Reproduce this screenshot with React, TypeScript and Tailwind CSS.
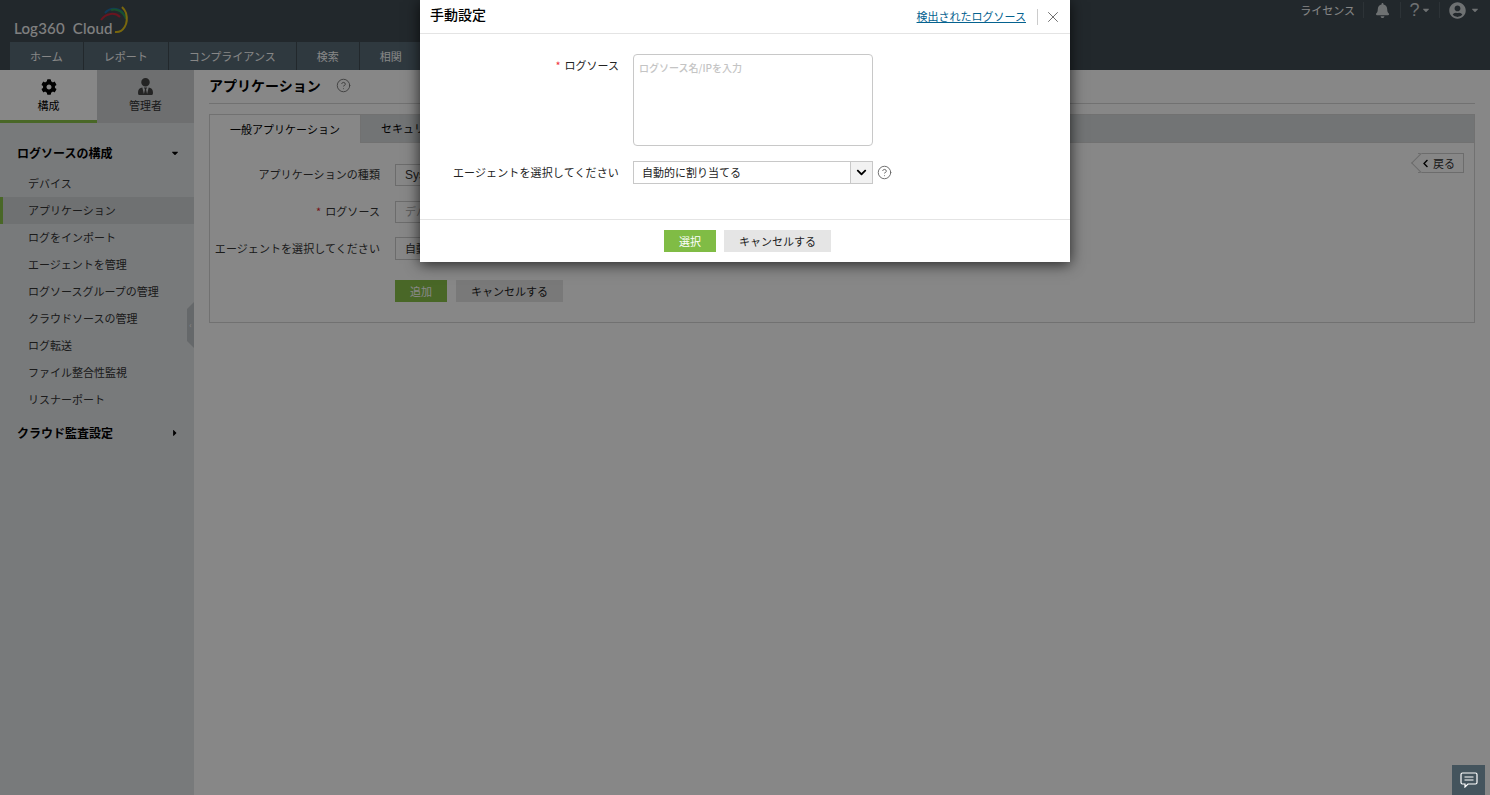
import { FaBell, FaCaretDown, FaCaretRight, FaChevronDown, FaChevronLeft, FaCog, FaUserCircle, FaUserTie } from 'react-icons/fa';
import { CircleHelp, X } from 'lucide-react';

const navItems = ['ホーム', 'レポート', 'コンプライアンス', '検索', '相関', 'アラート', '構成'];
const sideItems = [
  'デバイス',
  'アプリケーション',
  'ログをインポート',
  'エージェントを管理',
  'ログソースグループの管理',
  'クラウドソースの管理',
  'ログ転送',
  'ファイル整合性監視',
  'リスナーポート',
];

function Logo() {
  return (
    <div className="relative h-[42px] w-[194px]">
      <span className="absolute left-[14px] top-[19px] font-['Lato',sans-serif] text-[15px] font-medium leading-[18px] tracking-[0.2px] text-[#f2f2f2] whitespace-pre">
        Log360  Cloud
      </span>
      <svg className="absolute left-[98px] top-[5px]" width="32" height="30" viewBox="0 0 32 30" fill="none">
        <path d="M7 8 C13 1 24 3 27 12" stroke="#1f6fa8" strokeWidth="2" />
        <path d="M13 5 C19 3 26 7 28 14" stroke="#2e9a55" strokeWidth="2" />
        <path d="M3 15 C8 8 17 7 22 12" stroke="#c8283c" strokeWidth="2" />
        <path d="M17 27 C25 28 31 19 28 8 C27 5 26 4 24 2" stroke="#e5c31a" strokeWidth="2" />
      </svg>
    </div>
  );
}

function Header() {
  return (
    <header className="h-[70px] bg-[#414c54] text-white relative">
      <Logo />
      <nav className="flex h-[28px] pl-[10px] text-[11px]">
        {navItems.map((item) => (
          <div key={item} className="flex items-center bg-[#596c78] px-[20px] mr-px">
            {item}
          </div>
        ))}
      </nav>
      <div className="absolute right-0 top-0 flex h-[20px] items-center text-[#d0d5d8]">
        <span className="mr-px pr-2 text-[11px] text-white border-r border-[#566169]">ライセンス</span>
        <div className="flex h-4 w-9 items-center justify-center border-r border-[#566169]">
          <FaBell className="h-[15px] w-[15px]" />
        </div>
        <div className="flex h-4 w-[39px] items-center justify-center gap-px border-r border-[#566169]">
          <span className="font-['Liberation_Sans',sans-serif] text-[18px] leading-none">?</span>
          <FaCaretDown className="h-[10px] w-[10px]" />
        </div>
        <div className="flex h-4 w-[50px] items-center gap-1 pl-[9px]">
          <FaUserCircle className="h-[17px] w-[17px]" />
          <FaCaretDown className="h-[10px] w-[10px]" />
        </div>
      </div>
    </header>
  );
}

function Sidebar() {
  return (
    <aside className="relative w-[194px] shrink-0 bg-[#e3e6e9] text-[11px] text-[#333]">
      <div className="flex h-[53px]">
        <div className="flex w-[97px] flex-col items-center border-b-[3px] border-[#8bc34a] bg-[#ffffff] pt-[9px] text-black">
          <FaCog className="h-[16px] w-[16px]" />
          <span className="mt-[2px] leading-[16px]">構成</span>
        </div>
        <div className="flex w-[97px] flex-col items-center bg-[#d0d2d4] pt-[8px] text-[#333]">
          <FaUserTie className="h-[17px] w-[17px] text-[#444]" />
          <span className="mt-[2px] leading-[16px]">管理者</span>
        </div>
      </div>
      <div className="mt-[18px] flex h-[24px] items-center justify-between pl-[17px] pr-[14px] text-[12px] font-bold text-black">
        ログソースの構成
        <FaCaretDown className="h-[10px] w-[10px]" />
      </div>
      <ul className="mt-[5px]">
        {sideItems.map((item) => (
          <li
            key={item}
            className={
              item === 'アプリケーション'
                ? 'flex h-[27px] items-center border-l-[3px] border-[#8bc34a] bg-[#d2d5d8] pl-[25px]'
                : 'flex h-[27px] items-center pl-[28px]'
            }
          >
            {item}
          </li>
        ))}
      </ul>
      <div className="mt-[8px] flex h-[24px] items-center justify-between pl-[17px] pr-[14px] text-[12px] font-bold text-black">
        クラウド監査設定
        <FaCaretRight className="h-[10px] w-[10px]" />
      </div>
      <div className="absolute right-0 top-[232px] flex h-[46px] w-[7px] items-center justify-center bg-[#bfc4c8] text-[8px] leading-none text-white [clip-path:polygon(100%_0,100%_100%,0_85%,0_15%)]">
        ‹
      </div>
    </aside>
  );
}

function FormRow({ label, required, children }: { label: string; required?: boolean; children: React.ReactNode }) {
  return (
    <div className="flex h-[23px] items-center">
      <label className="w-[185px] pr-[15px] text-right text-[11px] tracking-[0.07px] whitespace-nowrap text-[#333]">
        {required && <span className="mr-1 text-[#e0252b]">*</span>}
        {label}
      </label>
      {children}
    </div>
  );
}

function Main() {
  return (
    <main className="flex-1 px-[15px] text-[11px] text-[#333]">
      <div className="flex h-[34px] items-center border-b border-[#d5d5d5] pb-[2px]">
        <h1 className="text-[14px] font-bold text-black">アプリケーション</h1>
        <CircleHelp className="ml-[15px] h-[15px] w-[15px] text-[#777]" strokeWidth={1.5} />
      </div>
      <section className="mt-[10px] h-[209px] border border-[#d5d5d5]">
        <div className="flex h-[28px] border-b border-[#d5d5d5] bg-[#d8dbde]">
          <div className="flex h-[28px] w-[151px] items-center justify-center border-r border-[#d5d5d5] bg-white text-black">
            一般アプリケーション
          </div>
          <div className="flex items-center px-[20px] text-black">セキュリティアプリケーション</div>
        </div>
        <div className="relative flex flex-col gap-[14px] pt-[20px]">
          <FormRow label="アプリケーションの種類">
            <div className="flex h-[22px] w-[240px] items-center border border-[#ccc] bg-white pl-[9px] font-['Liberation_Sans',sans-serif] text-[12px]">
              Syslog
            </div>
          </FormRow>
          <FormRow label="ログソース" required>
            <div className="flex h-[22px] w-[240px] items-center border border-[#ccc] bg-white pl-[9px] text-[#aaa]">
              デバイス
            </div>
          </FormRow>
          <FormRow label="エージェントを選択してください">
            <div className="flex h-[23px] w-[240px] items-center border border-[#ccc] bg-white pl-[9px]">
              自動的に割り当てる
            </div>
          </FormRow>
          <div className="mt-[6px] flex gap-[9px] pl-[185px]">
            <button type="button" className="h-[22px] w-[52px] bg-[#8bc34a] text-white">追加</button>
            <button type="button" className="h-[22px] w-[107px] bg-[#e5e5e5] text-[#222]">キャンセルする</button>
          </div>
          <div className="absolute right-[10px] top-[10px] flex h-[20px] w-[46px] items-center justify-end gap-[3px] border border-[#ccc] border-l-0 bg-white pr-[8px]">
            <span className="absolute -left-[4px] top-[2px] h-[14px] w-[14px] rotate-45 border-b border-l border-[#ccc] bg-white" />
            <FaChevronLeft className="relative h-[9px] w-[9px] text-black" />
            <span className="relative">戻る</span>
          </div>
        </div>
      </section>
    </main>
  );
}

function ManualDialog() {
  return (
    <div className="absolute left-[420px] top-0 z-20 h-[262px] w-[650px] bg-white text-[11px] text-[#222] shadow-[0_2px_14px_rgba(0,0,0,0.75)]">
      <div className="flex h-[34px] items-center justify-between border-b border-[#e4e4e4] pl-[10px] pr-[8px]">
        <h2 className="mb-[4px] text-[14px] font-medium text-black">手動設定</h2>
        <div className="flex items-center">
          <a className="text-[11px] text-[#05628f] underline">検出されたログソース</a>
          <span className="ml-[11px] mr-[6px] h-4 w-px bg-[#ccc]" />
          <X className="h-[18px] w-[18px] text-[#666]" strokeWidth={1.25} />
        </div>
      </div>
      <div className="flex h-[185px] flex-col gap-[15px] pt-[20px]">
        <div className="flex">
          <label className="w-[199px] pt-[3px] text-right">
            <span className="mr-1 text-[#f0353b]">*</span>ログソース
          </label>
          <div className="ml-[14px] h-[92px] w-[240px] rounded-[4px] border border-[#c8c8c8] px-[5px] py-[5px] text-[10px] font-medium text-[#c4c4c4]">
            ログソース名/IPを入力
          </div>
        </div>
        <div className="flex items-center">
          <label className="w-[199px] text-right tracking-[0.13px]">エージェントを選択してください</label>
          <div className="ml-[14px] flex h-[23px] w-[240px] items-center border border-[#c8c8c8]">
            <span className="flex-1 pl-[8px]">自動的に割り当てる</span>
            <span className="flex h-full w-[22px] items-center justify-center border-l border-[#c8c8c8] bg-[#f2f2f2]">
              <FaChevronDown className="h-[11px] w-[11px] text-black" />
            </span>
          </div>
          <CircleHelp className="ml-[4px] h-[15px] w-[15px] text-[#666]" strokeWidth={1.5} />
        </div>
      </div>
      <div className="flex h-[43px] items-start justify-center gap-[8px] border-t border-[#e4e4e4] pl-[5px] pt-[10px]">
        <button type="button" className="h-[22px] w-[52px] bg-[#80bc45] text-white">選択</button>
        <button type="button" className="h-[22px] w-[107px] bg-[#e5e5e5] text-[#222]">キャンセルする</button>
      </div>
    </div>
  );
}

export default function App() {
  return (
    <div className="relative h-[795px] w-[1490px] overflow-hidden bg-white font-['Noto_Sans_CJK_JP','Noto_Sans',sans-serif]">
      <Header />
      <div className="flex h-[725px]">
        <Sidebar />
        <Main />
      </div>
      <div className="absolute inset-0 z-10 bg-black/[0.47]" />
      <ManualDialog />
      <button type="button" className="absolute bottom-0 right-[5px] z-20 flex h-[30px] w-[33px] items-center justify-center bg-[#44545d]">
        <svg width="18" height="16" viewBox="0 0 18 16" fill="none" stroke="#fff" strokeWidth="1.2">
          <path d="M2.5 1h13a1.5 1.5 0 0 1 1.5 1.5v8a1.5 1.5 0 0 1-1.5 1.5H8l-3 3v-3H2.5A1.5 1.5 0 0 1 1 10.500v-8A1.500 1.500 0 0 1 2.500 1z" />
          <path d="M4.500 5h9M4.500 8h9" />
        </svg>
      </button>
    </div>
  );
}
